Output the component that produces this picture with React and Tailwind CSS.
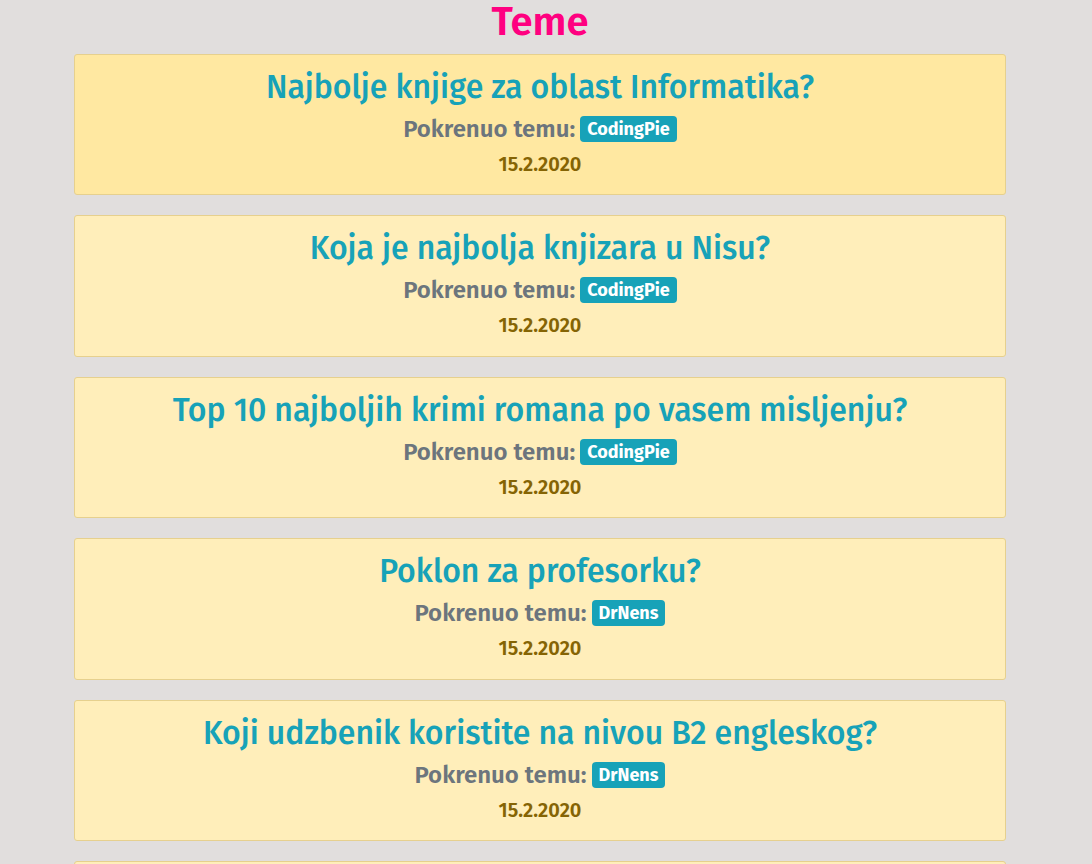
const topics = [
  { title: "Najbolje knjige za oblast Informatika?", author: "CodingPie", date: "15.2.2020", active: true },
  { title: "Koja je najbolja knjizara u Nisu?", author: "CodingPie", date: "15.2.2020" },
  { title: "Top 10 najboljih krimi romana po vasem misljenju?", author: "CodingPie", date: "15.2.2020" },
  { title: "Poklon za profesorku?", author: "DrNens", date: "15.2.2020" },
  { title: "Koji udzbenik koristite na nivou B2 engleskog?", author: "DrNens", date: "15.2.2020" },
  { title: "Gde kupiti polovne knjige?", author: "DrNens", date: "15.2.2020" },
];

export default function App() {
  return (
    <div
      className="w-full h-[864px] overflow-hidden bg-[#e1dedd]"
      style={{ fontFamily: '"Fira Sans", Lato, "Noto Sans", sans-serif' }}
    >
      <h1 className="text-center text-[40px] leading-[44px] h-[54px] font-semibold text-[#ff0080] w-[932px] ml-[74px]">
        Teme
      </h1>

      <div className="ml-[74px] w-[932px] flex flex-col gap-[20px]">
        {topics.map((t, i) => (
          <div
            key={i}
            className={`border border-[#e6d08e] rounded-[3px] flex flex-col items-center pt-[13px] pb-[19.4px] ${
              t.active ? "bg-[#ffe8a1]" : "bg-[#ffeeba]"
            }`}
          >
            <h2 className="text-[32px] leading-[38px] font-medium text-[#17a2b8]">
              {t.title}
            </h2>
            <div className="mt-[10px] h-[26px] flex items-center gap-[5px]">
              <span className="text-[24px] leading-[26px] font-semibold text-[#6c757d]">Pokrenuo temu:</span>
              <span className="h-[26px] flex items-center bg-[#17a2b8] text-white font-bold text-[18px] leading-none px-[7px] rounded-[4px]">
                {t.author}
              </span>
            </div>
            <p className="mt-[11px] text-[20px] leading-[22px] font-semibold text-[#856404]">
              {t.date}
            </p>
          </div>
        ))}
      </div>
    </div>
  );
}
